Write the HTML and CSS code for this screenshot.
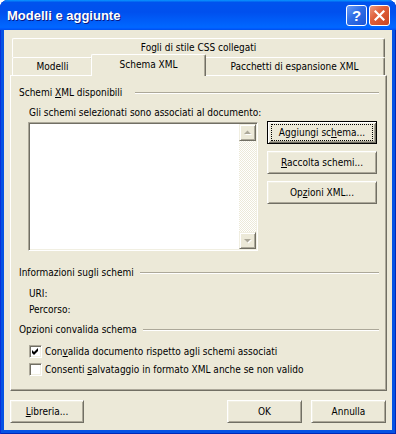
FILE: index.html
```
<!DOCTYPE html>
<html lang="it">
<head>
<meta charset="utf-8">
<title>Modelli e aggiunte</title>
<link rel="stylesheet" href="styles.css">
</head>
<body>
<div class="window">
  <div class="titlebar">
    <div class="title">Modelli e aggiunte</div>
    <div class="caption-buttons">
      <div class="cap-btn cap-help">?</div>
      <div class="cap-btn cap-close"><svg width="11" height="11" viewBox="0 0 11 11"><path d="M1.5 1.5 L9.5 9.5 M9.5 1.5 L1.5 9.5" stroke="#fff" stroke-width="2.2" stroke-linecap="square"/></svg></div>
    </div>
  </div>
  <div class="client">
    <div class="tabrow tabrow-back">
      <div class="tab tab-css">Fogli di stile CSS collegati</div>
    </div>
    <div class="tabrow tabrow-front">
      <div class="tab tab-modelli">Modelli</div>
      <div class="tab tab-schema">Schema XML</div>
      <div class="tab tab-pacchetti">Pacchetti di espansione XML</div>
    </div>
    <div class="panel">
      <div class="group-head group-first"><span>Schemi <u>X</u>ML disponibili</span><div class="etch"></div></div>
      <div class="label">Gli schemi selezionati sono associati al documento:</div>
      <div class="list-row">
        <div class="listbox">
          <div class="list-body"></div>
          <div class="vscroll">
            <div class="sbtn"><svg width="8" height="6" viewBox="0 0 8 6"><path d="M4.5 1.5 L8 5 L1 5 Z" fill="#fff"/><path d="M3.5 0.5 L7 4 L0 4 Z" fill="#ACA899"/></svg></div>
            <div class="track"></div>
            <div class="sbtn"><svg width="8" height="6" viewBox="0 0 8 6"><path d="M1 2 L8 2 L4.5 5.5 Z" fill="#fff"/><path d="M0 1 L7 1 L3.5 4.5 Z" fill="#ACA899"/></svg></div>
          </div>
        </div>
        <div class="side-buttons">
          <div class="btn btn-default"><span class="focus">Aggiungi sc<u>h</u>ema...</span></div>
          <div class="btn"><span><u>R</u>accolta schemi...</span></div>
          <div class="btn"><span>Op<u>z</u>ioni XML...</span></div>
        </div>
      </div>
      <div class="group-head group-info"><span>Informazioni sugli schemi</span><div class="etch"></div></div>
      <div class="info-line info-uri">URI:</div>
      <div class="info-line info-path">Percorso:</div>
      <div class="group-head group-options"><span>Opzioni convalida schema</span><div class="etch"></div></div>
      <div class="check check-first">
        <span class="box"><svg width="7" height="7" viewBox="0 0 7 7"><path d="M0 2 L2 4 L6 0 L6 3 L2 7 L0 5 Z" fill="#000"/></svg></span>
        <span>Con<u>v</u>alida documento rispetto agli schemi associati</span>
      </div>
      <div class="check check-second">
        <span class="box"></span>
        <span>Consenti <u>s</u>alvataggio in formato XML anche se non valido</span>
      </div>
    </div>
    <div class="footer">
      <div class="btn btn-libreria"><span><u>L</u>ibreria...</span></div>
      <div class="btn btn-ok"><span>OK</span></div>
      <div class="btn btn-cancel"><span>Annulla</span></div>
    </div>
  </div>
</div>
</body>
</html>
```
FILE: styles.css
```
html, body {
  margin: 0;
  padding: 0;
  background: #ffffff;
}

.window {
  width: 396px;
  height: 434px;
  box-sizing: border-box;
  display: flex;
  flex-direction: column;
  background: #0553E4;
  border-radius: 8px 8px 0 0;
  overflow: hidden;
  box-shadow: inset 1px 0 #0831D9, inset -1px 0 #0029B8, inset 0 -1px #0029B8;
}

.titlebar {
  height: 30px;
  flex: none;
  display: flex;
  align-items: center;
  padding: 0 6px 0 7px;
  background: linear-gradient(180deg, #0997ff, #0053ee 8%, #0050ee 40%, #0066ff 88%, #0066ff 93%, #005bff 95%, #0050e8 100%);
}

.title {
  flex: 1;
  color: #ffffff;
  font: bold 13px "Liberation Sans", Arial, sans-serif;
  text-shadow: 1px 1px #0a1883;
  padding-top: 1px;
}

.caption-buttons {
  display: flex;
  gap: 2px;
  padding-top: 1px;
}

.cap-btn {
  width: 21px;
  height: 21px;
  box-sizing: border-box;
  border: 1px solid #ffffff;
  border-radius: 3px;
  display: flex;
  align-items: center;
  justify-content: center;
}

.cap-help {
  background: linear-gradient(135deg, #6a9cf6 0%, #2f6de6 45%, #1c55d6 100%);
  color: #ffffff;
  font: bold 15px "Liberation Sans", Arial, sans-serif;
  line-height: 19px;
}

.cap-close {
  background: linear-gradient(135deg, #ec9a80 0%, #e0603b 40%, #c9441f 100%);
}

.client {
  flex: 1;
  margin: 0 4px 4px 4px;
  background: #ECE9D8;
  display: flex;
  flex-direction: column;
  font-family: "DejaVu Sans Condensed", "Liberation Sans", Arial, sans-serif;
  font-size: 10px;
  line-height: 13px;
  color: #000000;
}

u {
  text-decoration: underline;
  text-underline-offset: 1px;
}

.tabrow {
  display: flex;
  margin-left: 8px;
}

.tabrow-back {
  margin-top: 8px;
  width: 373px;
  height: 19px;
}

.tabrow-front {
  height: 18px;
  align-items: flex-end;
}

.tab {
  box-sizing: border-box;
  background: #ECE9D8;
  border-top: 1px solid #ffffff;
  border-left: 1px solid #ffffff;
  border-right: 1px solid #716F64;
  box-shadow: inset -1px 0 #ACA899;
  border-radius: 2px 2px 0 0;
  text-align: center;
  white-space: nowrap;
}

.tab-css {
  width: 100%;
  height: 19px;
  padding-top: 2px;
}

.tab-modelli {
  width: 81px;
  height: 18px;
  padding-top: 2px;
}

.tab-schema {
  width: 115px;
  height: 22px;
  margin: 0 -2px -1px -2px;
  padding-top: 3px;
  position: relative;
  z-index: 1;
}

.tab-pacchetti {
  width: 181px;
  height: 18px;
  padding-top: 2px;
}

.panel {
  margin-left: 6px;
  width: 377px;
  height: 316px;
  box-sizing: border-box;
  border-top: 1px solid #ffffff;
  border-left: 1px solid #ffffff;
  border-right: 1px solid #716F64;
  border-bottom: 1px solid #716F64;
  box-shadow: inset -1px -1px #ACA899;
  padding: 0 7px 0 8px;
  display: flex;
  flex-direction: column;
}

.group-head {
  display: flex;
  align-items: center;
  height: 13px;
  white-space: nowrap;
}

.etch {
  flex: 1;
  height: 0;
  border-top: 1px solid #ACA899;
  border-bottom: 1px solid #ffffff;
  margin-left: 6px;
}

.group-first {
  margin-top: 10px;
}

.group-first .etch {
  margin-left: 13px;
}

.group-info {
  margin-top: 15px;
}

.group-options {
  margin-top: 7px;
}

.label {
  margin: 7px 0 0 10px;
  white-space: nowrap;
}

.list-row {
  display: flex;
  align-items: flex-start;
  margin: 3px 0 0 9px;
}

.listbox {
  width: 230px;
  height: 129px;
  box-sizing: border-box;
  border: 1px solid;
  border-color: #ACA899 #ffffff #ffffff #ACA899;
  box-shadow: inset 1px 1px #716F64, inset -1px -1px #F1EFE2;
  background: #ffffff;
  padding: 1px;
  display: flex;
}

.list-body {
  flex: 1;
}

.vscroll {
  width: 17px;
  display: flex;
  flex-direction: column;
}

.track {
  flex: 1;
  background: repeating-conic-gradient(#ffffff 0 25%, #ECE9D8 0 50%) 0 0 / 2px 2px;
}

.sbtn {
  height: 17px;
  box-sizing: border-box;
  background: #ECE9D8;
  border: 1px solid;
  border-color: #F1EFE2 #716F64 #716F64 #F1EFE2;
  box-shadow: inset 1px 1px #ffffff, inset -1px -1px #ACA899;
  display: flex;
  align-items: center;
  justify-content: center;
}

.side-buttons {
  display: flex;
  flex-direction: column;
  gap: 7px;
  margin: -1px 0 0 9px;
}

.btn {
  width: 110px;
  height: 23px;
  box-sizing: border-box;
  background: #ECE9D8;
  border: 1px solid;
  border-color: #ffffff #716F64 #716F64 #ffffff;
  box-shadow: inset 1px 1px #F1EFE2, inset -1px -1px #ACA899;
  display: flex;
  align-items: center;
  justify-content: center;
  white-space: nowrap;
}

.btn-default {
  border-color: #000000;
  box-shadow: inset 1px 1px #ffffff, inset -1px -1px #716F64, inset 2px 2px #F1EFE2, inset -2px -2px #ACA899;
  align-items: stretch;
}

.focus {
  flex: 1;
  margin: 2px 3px;
  border: 1px dotted #000000;
  display: flex;
  align-items: center;
  justify-content: center;
}

.info-line {
  margin-left: 10px;
}

.info-uri {
  margin-top: 8px;
}

.info-path {
  margin-top: 3px;
}

.check {
  display: flex;
  align-items: center;
  gap: 3px;
  height: 13px;
  margin-left: 10px;
  white-space: nowrap;
}

.check-first {
  margin-top: 9px;
}

.check-second {
  margin-top: 5px;
}

.box {
  width: 13px;
  height: 13px;
  box-sizing: border-box;
  flex: none;
  background: #ffffff;
  border: 1px solid;
  border-color: #ACA899 #ffffff #ffffff #ACA899;
  box-shadow: inset 1px 1px #716F64, inset -1px -1px #F1EFE2;
  display: flex;
  align-items: center;
  justify-content: center;
}

.footer {
  display: flex;
  gap: 9px;
  margin-top: 9px;
  padding: 0 6px;
}

.btn-libreria {
  width: 74px;
  margin-right: auto;
}

.btn-ok,
.btn-cancel {
  width: 75px;
}
```
